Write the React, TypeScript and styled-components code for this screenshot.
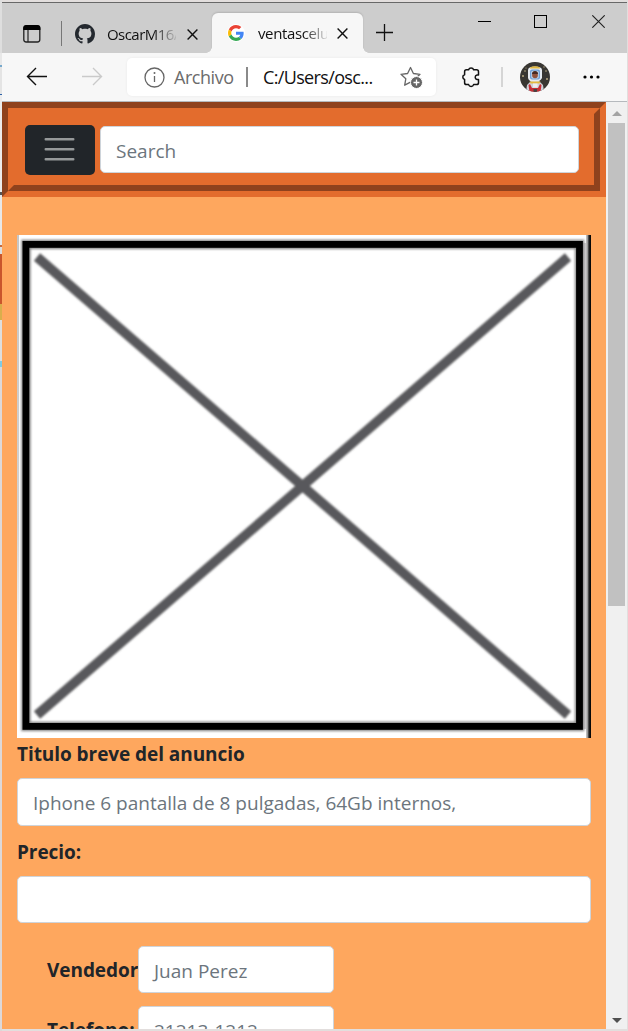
import React from "react";
import styled, { createGlobalStyle } from "styled-components";

const GlobalStyle = createGlobalStyle`
  * { box-sizing: border-box; }
  html, body { margin: 0; padding: 0; height: 1031px; overflow: hidden; }
  body { background: #dcd8d8; font-family: "Open Sans", "Noto Sans", sans-serif; }
  svg { display: block; flex: none; }
`;

const Desktop = styled.div`
  width: 628px;
  height: 1031px;
  padding: 2px 1px 2px 2px;
  overflow: hidden;
  background: linear-gradient(#dedede 0 53px, #e8e8e8 53px 65px, #77a9cc 65px 67px, #e4e4e4 67px 94px,
    #2d62a8 94px 95px, #ececec 95px 192px, #555 192px 195px, #e8e8e8 195px 245px, #c66a40 245px 247px,
    #ddd 247px 254px, #c9562c 254px 304px, #d9ae4c 304px 320px, #dedede 320px 361px, #7fcbe4 361px 367px, #ddd8d8 367px)
    0 0 / 2px 100% no-repeat, #e2dedd;
`;

const Browser = styled.div`
  display: flex;
  flex-direction: column;
  height: 1027px;
  border-top: 1px solid #686868;
  background: #f7f7f7;
`;

const TabStrip = styled.div`
  display: flex;
  height: 50px;
  background: #cdcdcd;
  flex: none;
`;

const StripTools = styled.div`
  display: flex;
  align-items: center;
  width: 60px;
  height: 50px;
  padding: 11px 0 0 20px;
  gap: 19px;
`;

const Rule = styled.div<{ $h: number; $w?: number; $c: string }>`
  width: ${(p) => p.$w ?? 1}px;
  height: ${(p) => p.$h}px;
  background: ${(p) => p.$c};
  flex: none;
`;

const Tab = styled.div<{ $active?: boolean; $width: number }>`
  position: relative;
  display: flex;
  align-items: center;
  width: ${(p) => p.$width}px;
  height: ${(p) => (p.$active ? 40 : 39)}px;
  margin-top: ${(p) => (p.$active ? 10 : 11)}px;
  padding-left: ${(p) => (p.$active ? 15 : 13)}px;
  background: ${(p) => (p.$active ? "#f7f7f7" : "transparent")};
  border-radius: 6px 6px 0 0;
  box-shadow: ${(p) => (p.$active ? "0 -1px 2px rgba(0,0,0,.13)" : "none")};
  clip-path: inset(-3px -6px 0 -6px);
  &::before, &::after {
    content: "";
    display: ${(p) => (p.$active ? "block" : "none")};
    position: absolute;
    bottom: 0;
    width: 6px;
    height: 6px;
  }
  &::before { left: -6px; background: radial-gradient(circle at 0 0, transparent 5.5px, #f7f7f7 6px); }
  &::after { right: -6px; background: radial-gradient(circle at 100% 0, transparent 5.5px, #f7f7f7 6px); }
`;

const TabTitle = styled.div<{ $left: number; $ls: number }>`
  width: 69px;
  margin-left: ${(p) => p.$left}px;
  font-size: 15px;
  letter-spacing: ${(p) => p.$ls}px;
  line-height: 20px;
  white-space: nowrap;
  overflow: hidden;
  flex: none;
  color: transparent;
  background: linear-gradient(90deg, #111 66%, rgba(17, 17, 17, 0.1) 100%);
  background-clip: text;
  -webkit-background-clip: text;
`;

const TabClose = styled.div<{ $gap: number }>`
  margin-left: ${(p) => p.$gap}px;
  padding-top: 1px;
`;

const NewTab = styled.div`
  padding: 20px 0 0 12px;
`;

const WindowButtons = styled.div`
  display: flex;
  gap: 43px;
  margin-left: auto;
  padding: 12px 22px 0 0;
`;

const Toolbar = styled.div`
  display: flex;
  align-items: center;
  height: 49px;
  padding-left: 23px;
  border-bottom: 1px solid #b5b9bd;
  flex: none;
`;

const NavButtons = styled.div`
  display: flex;
  gap: 32px;
  width: 102px;
`;

const AddressBar = styled.div`
  display: flex;
  align-items: center;
  width: 309px;
  height: 38px;
  padding-left: 17px;
  border-radius: 5px;
  background: #fff;
  box-shadow: 0 0 3px rgba(0, 0, 0, 0.06);
`;

const Address = styled.div<{ $muted?: boolean; $left: number; $w: number; $ls: number }>`
  width: ${(p) => p.$w}px;
  margin-left: ${(p) => p.$left}px;
  flex: none;
  font-size: 18px;
  line-height: 24px;
  letter-spacing: ${(p) => p.$ls}px;
  white-space: nowrap;
  color: ${(p) => (p.$muted ? "#6c6c6c" : "#111")};
`;

const ToolbarActions = styled.div`
  display: flex;
  align-items: center;
  padding-left: 25px;
`;

const Spacer = styled.div<{ $w: number }>`
  width: ${(p) => p.$w}px;
  flex: none;
`;

const Viewport = styled.div`
  display: flex;
  height: 927px;
  overflow: hidden;
`;

const Page = styled.div`
  width: 604px;
  height: 927px;
  overflow: hidden;
  background: #fea75e;
  color: #212529;
`;

const HeaderFrame = styled.div`
  height: 95px;
  border: 6px solid;
  border-color: #8f421d #e36c2d #e36c2d #8f421d;
`;

const Header = styled.div`
  display: flex;
  align-items: flex-start;
  height: 83px;
  padding: 11px 9px 0 11px;
  border: 6px solid;
  border-color: #e36c2d #8f421d #8f421d #e36c2d;
  background: #e36c2d;
`;

const MenuButton = styled.div`
  width: 70px;
  height: 50px;
  margin-right: 5px;
  padding: 12px 0 0 19px;
  border-radius: 5px;
  background: #212529;
`;

const Field = styled.div<{ $w?: number; $h?: number; $top?: number; $ls?: number }>`
  width: ${(p) => (p.$w ? p.$w + "px" : "100%")};
  height: ${(p) => p.$h ?? 47}px;
  margin-top: ${(p) => p.$top ?? 0}px;
  padding: 0 15px;
  border: 1px solid #ced4da;
  border-radius: 5px;
  background: #fff;
  color: #6c757d;
  font-size: 19px;
  line-height: 48px;
  letter-spacing: ${(p) => p.$ls ?? 0}px;
  white-space: nowrap;
  flex: none;
`;

const Main = styled.div`
  padding: 38px 15px 0;
`;

const Label = styled.div<{ $h?: number; $top?: number; $w?: number }>`
  width: ${(p) => (p.$w ? p.$w + "px" : "auto")};
  height: ${(p) => p.$h ?? 30}px;
  margin-top: ${(p) => p.$top ?? 0}px;
  line-height: ${(p) => (p.$h ? p.$h + 2 : 30)}px;
  font-size: 19px;
  font-weight: 700;
  letter-spacing: -0.06px;
  white-space: nowrap;
`;

const SellerRow = styled.div<{ $top: number }>`
  display: flex;
  margin-top: ${(p) => p.$top}px;
  padding-left: 30px;
`;

const ScrollBar = styled.div`
  display: flex;
  flex-direction: column;
  align-items: center;
  width: 21px;
  padding-top: 9px;
  background: #f0f0f0;
`;

const Thumb = styled.div`
  width: 17px;
  height: 483px;
  margin: 7px 0 412px;
  background: #c1c1c1;
`;

const CloseX = () => (
  <svg width="11" height="11" viewBox="0 0 11 11">
    <path d="M.6.600l9.800 9.800M10.400.600L.6 10.400" stroke="#111" strokeWidth="1.400" />
  </svg>
);

const Placeholder = () => (
  <svg width="574" height="503" viewBox="0 0 574 503">
    <defs>
      <filter id="soft" x="-5%" y="-5%" width="110%" height="110%">
        <feGaussianBlur stdDeviation="0.9" />
      </filter>
      <linearGradient id="edge">
        <stop offset="0" stopColor="#ccc" />
        <stop offset=".3" stopColor="#999" />
        <stop offset=".6" stopColor="#222" />
        <stop offset="1" stopColor="#000" />
      </linearGradient>
      <linearGradient id="leftEdge" x2="0" y2="1">
        <stop offset="0" stopColor="#c6c6c6" />
        <stop offset=".6" stopColor="#d2d2d2" />
        <stop offset=".9" stopColor="#fff" />
      </linearGradient>
    </defs>
    <rect width="574" height="503" fill="#fff" />
    <rect width="2" height="480" fill="url(#leftEdge)" />
    <rect x="566" y="8" width="4" height="486" fill="#d4d2d4" />
    <rect x="569" width="5" height="503" fill="url(#edge)" />
    <rect x="9" y="9.400" width="553.500" height="482" fill="none" stroke="#888" strokeWidth="9.500" filter="url(#soft)" />
    <rect x="8.900" y="9.400" width="553.600" height="482" fill="none" stroke="#000" strokeWidth="6.800" />
    <g stroke="#59595b" strokeWidth="9.600" filter="url(#soft)">
      <path d="M20 22L551 480M551 22L20 480" />
    </g>
  </svg>
);

const Astronaut = () => (
  <svg width="30" height="30" viewBox="0 0 30 30">
    <clipPath id="avatar"><circle cx="15" cy="15" r="15" /></clipPath>
    <g clipPath="url(#avatar)">
      <rect width="30" height="30" fill="#383632" />
      <g fill="#b8aa82">
        <circle cx="3" cy="14" r="1" /><circle cx="5" cy="9" r=".8" /><circle cx="26" cy="9" r=".8" />
        <circle cx="27" cy="17" r="1" /><circle cx="24" cy="5" r=".7" /><circle cx="6" cy="6" r=".6" />
      </g>
      <path d="M6 30l1-7 4-4h8l4 4 1 7z" fill="#cdd2da" />
      <path d="M8 8q0-3.500 7-3.500T22 8v8q-2 4-7.500 4T8 16z" fill="#e6eaf0" />
      <path d="M10 5.500q5-2.500 10 0v1H10z" fill="#dfb63f" />
      <rect x="10" y="7.500" width="10" height="10" rx="2" fill="#6f9fd6" />
      <rect x="11.300" y="8.800" width="7.400" height="7.600" rx="1.500" fill="#c5d8ea" />
      <ellipse cx="15" cy="13" rx="2.900" ry="3.300" fill="#91523c" />
      <path d="M12 12q0-3 3-3t3 3z" fill="#4a2a22" />
      <path d="M9.500 19.500h11l-1 2h-9z" fill="#e4b93e" />
      <path d="M10 22l2 4h6l2-4 1.500 1-1 7h-11l-1-7z" fill="#c72f35" />
      <path d="M13 21.500h4.500v4H13z" fill="#eee" />
      <path d="M13.500 27h3.500v3h-3.500z" fill="#444" />
    </g>
  </svg>
);

export default function App() {
  return (
    <>
      <GlobalStyle />
      <Desktop>
        <Browser>
          <TabStrip>
            <StripTools>
              <svg width="20" height="20" viewBox="0 0 20 20">
                <rect x="1.800" y="2" width="16" height="16" rx="2.500" fill="none" stroke="#222" strokeWidth="1.300" />
                <path d="M1.200 6V4q0-3 3-3h11.200q3 0 3 3v2z" fill="#000" />
                <path d="M6 6v12" stroke="#222" strokeWidth="1.200" />
              </svg>
              <Rule $h={25} $c="#777" />
            </StripTools>
            <Tab $width={150}>
              <svg width="20" height="20" viewBox="0 0 16 16">
                <path fill="#24292f" d="M8 0C3.58 0 0 3.58 0 8c0 3.54 2.29 6.53 5.47 7.59.4.07.55-.17.55-.38 0-.19-.01-.82-.01-1.49-2.01.37-2.53-.49-2.69-.94-.09-.23-.48-.94-.82-1.13-.28-.15-.68-.52-.01-.53.63-.01 1.08.58 1.23.82.72 1.21 1.87.87 2.33.66.07-.52.28-.87.51-1.07-1.78-.2-3.64-.89-3.64-3.95 0-.87.31-1.59.82-2.15-.08-.2-.36-1.02.08-2.12 0 0 .67-.21 2.2.82.64-.18 1.32-.27 2-.27s1.36.09 2 .27c1.53-1.04 2.2-.82 2.2-.82.44 1.1.16 1.92.08 2.12.51.56.82 1.27.82 2.15 0 3.07-1.87 3.75-3.65 3.95.29.25.54.73.54 1.48 0 1.07-.01 1.93-.01 2.2 0 .21.15.46.55.38A8.01 8.01 0 0 0 16 8c0-4.42-3.58-8-8-8z" />
              </svg>
              <TabTitle $left={12} $ls={-0.55}>OscarM16/</TabTitle>
              <TabClose $gap={11}><CloseX /></TabClose>
            </Tab>
            <Tab $active $width={151}>
              <svg width="18" height="18" viewBox="-3 -3 54 54">
                <circle cx="24" cy="24" r="27" fill="#fff" />
                <path fill="#EA4335" d="M24 9.500c3.540 0 6.710 1.220 9.210 3.600l6.850-6.850C35.900 2.380 30.470 0 24 0 14.620 0 6.510 5.380 2.560 13.220l7.980 6.190C12.430 13.720 17.740 9.500 24 9.500z" />
                <path fill="#4285F4" d="M46.980 24.550c0-1.570-.150-3.090-.380-4.550H24v9.020h12.940c-.580 2.960-2.260 5.480-4.780 7.180l7.730 6c4.510-4.180 7.090-10.360 7.090-17.650z" />
                <path fill="#FBBC05" d="M10.530 28.590c-.480-1.450-.760-2.990-.760-4.590s.270-3.140.760-4.590l-7.980-6.190C.920 16.460 0 20.120 0 24s.920 7.540 2.560 10.780z" />
                <path fill="#34A853" d="M24 48c6.480 0 11.930-2.130 15.890-5.810l-7.730-6c-2.150 1.450-4.920 2.300-8.160 2.300-6.260 0-11.570-4.220-13.470-9.910l-7.980 6.190C6.510 42.620 14.620 48 24 48z" />
              </svg>
              <TabTitle $left={13} $ls={-0.38}>ventascelu</TabTitle>
              <TabClose $gap={10}><CloseX /></TabClose>
            </Tab>
            <NewTab>
              <svg width="19" height="19" viewBox="0 0 19 19">
                <path d="M1 9.500h17M9.500 1v17" stroke="#111" strokeWidth="1.300" />
              </svg>
            </NewTab>
            <WindowButtons>
              <svg width="13" height="13" viewBox="0 0 13 13"><path d="M0 6.500h13" stroke="#000" /></svg>
              <svg width="13" height="13" viewBox="0 0 13 13"><rect x=".5" y=".5" width="12" height="12" fill="none" stroke="#000" /></svg>
              <svg width="15" height="13" viewBox="-2 0 15 13"><path d="M.3.300l12.400 12.400M12.700.300L.3 12.700" stroke="#222" strokeWidth="1.100" /></svg>
            </WindowButtons>
          </TabStrip>
          <Toolbar>
            <NavButtons>
              <svg width="23" height="20" viewBox="0 0 23 20">
                <path d="M22 9.500H2.500M11 1L2.500 9.500 11 18" fill="none" stroke="#111" strokeWidth="1.400" />
              </svg>
              <svg width="23" height="20" viewBox="0 0 23 20">
                <path d="M2 9.500h19.500M13 1l8.500 8.500L13 18" fill="none" stroke="#cacaca" strokeWidth="1.400" />
              </svg>
            </NavButtons>
            <AddressBar>
              <svg width="21" height="21" viewBox="0 0 21 21">
                <circle cx="10.500" cy="10.500" r="9.500" fill="none" stroke="#666" strokeWidth="1.300" />
                <path d="M10.500 9v6" stroke="#666" strokeWidth="1.300" />
                <circle cx="10.500" cy="6" r="1" fill="#666" />
              </svg>
              <Address $muted $left={9} $w={72} $ls={-0.45}>Archivo</Address>
              <Rule $h={20} $w={2} $c="#8a8a8a" />
              <Address $left={15} $w={137} $ls={-0.65}>C:/Users/osc...</Address>
              <svg width="24" height="23" viewBox="0 0 24 23">
                <path d="M10.500 1.500l2.900 6 6.600.8-4.800 4.500-1.100 4.700-3.600-1.300-5.800 3 1.100-6.400L1 8.300l6.600-.8z" fill="none" stroke="#666" strokeWidth="1.300" strokeLinejoin="round" />
                <circle cx="16.500" cy="16.500" r="6" fill="#666" stroke="#fff" />
                <path d="M13.500 16.500h6M16.500 13.500v6" stroke="#fff" strokeWidth="1.300" />
              </svg>
            </AddressBar>
            <ToolbarActions>
              <svg width="20" height="22" viewBox="0 0 20 22">
                <path d="M5.500 3.800h2.100a2.600 2.600 0 0 1 5 0h3q1.900 0 1.900 1.900v3.200h-1.500a2.300 2.300 0 0 0 0 4.500h1.500v3.300q0 1.900-1.900 1.900h-3a2.600 2.600 0 0 1-5 0H5.500q-1.900 0-1.900-1.900v-3.200a2.500 2.500 0 0 1 0-4.800V5.700q0-1.900 1.900-1.900z" fill="none" stroke="#111" strokeWidth="1.500" strokeLinejoin="round" />
              </svg>
              <Spacer $w={20} />
              <Rule $h={20} $w={2} $c="#d5d5d5" />
              <Spacer $w={17} />
              <Astronaut />
              <Spacer $w={33} />
              <svg width="17" height="4" viewBox="0 0 17 4">
                <circle cx="2" cy="2" r="1.600" /><circle cx="8.500" cy="2" r="1.600" /><circle cx="15" cy="2" r="1.600" />
              </svg>
            </ToolbarActions>
          </Toolbar>
          <Viewport>
            <Page>
              <HeaderFrame>
                <Header>
                  <MenuButton>
                    <svg width="31" height="25" viewBox="0 0 31 25">
                      <path d="M1.700 2.300h27.600M1.700 12.300h27.600M1.700 22.300h27.600" stroke="#96999a" strokeWidth="2.400" strokeLinecap="round" />
                    </svg>
                  </MenuButton>
                  <Field $w={479} $top={1}>Search</Field>
                </Header>
              </HeaderFrame>
              <Main>
                <Placeholder />
                <Label $top={1}>Titulo breve del anuncio</Label>
                <Field $h={48} $top={9}>Iphone 6 pantalla de 8 pulgadas, 64Gb internos,</Field>
                <Label $top={11}>Precio:</Label>
                <Field $top={9} />
                <SellerRow $top={23}>
                  <Label $h={47} $w={91}>Vendedor</Label>
                  <Field $w={196}>Juan Perez</Field>
                </SellerRow>
                <SellerRow $top={13}>
                  <Label $h={47} $w={91}>Telefono:</Label>
                  <Field $w={196}>21213-1212</Field>
                </SellerRow>
              </Main>
            </Page>
            <ScrollBar>
              <svg width="10" height="5" viewBox="0 0 10 5"><path d="M0 5l5-5 5 5z" fill="#a3a3a3" /></svg>
              <Thumb />
              <svg width="10" height="5" viewBox="0 0 10 5"><path d="M0 0h10L5 5z" fill="#505050" /></svg>
            </ScrollBar>
          </Viewport>
        </Browser>
      </Desktop>
    </>
  );
}
